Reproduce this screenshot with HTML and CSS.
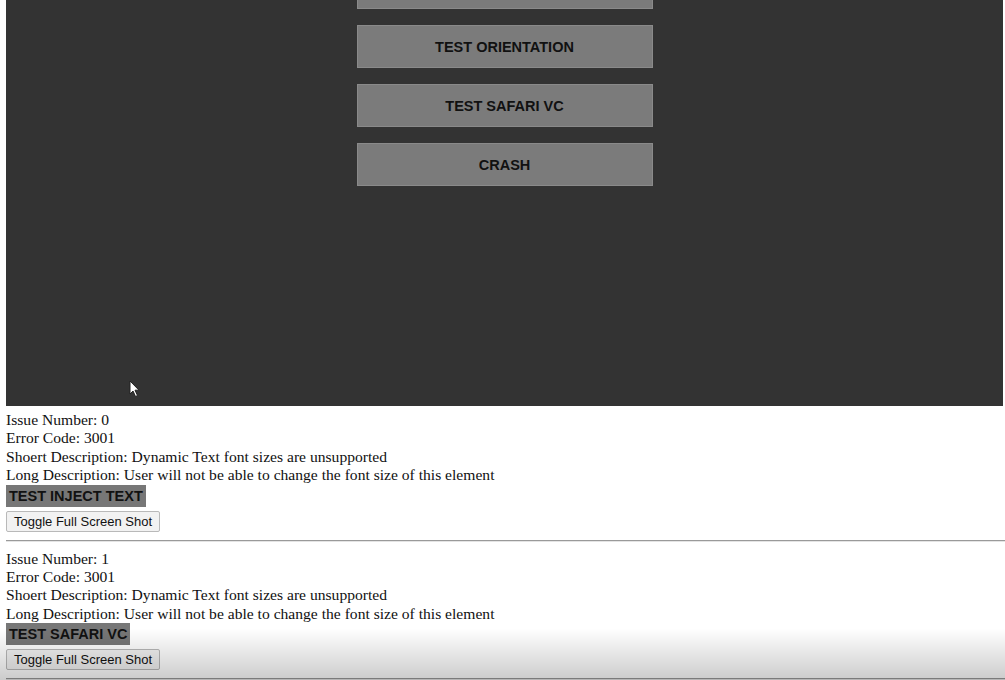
FILE: index.html
```html
<!DOCTYPE html>
<html lang="en">
<head>
    <meta charset="UTF-8">
    <meta name="viewport" content="width=device-width, initial-scale=1.0">
    <title>Accessibility Issues</title>
    <link rel="stylesheet" href="styles.css">
</head>
<body>

    <div class="shot">
        <div class="app-buttons">
            <!-- top button is scrolled out of view -->
            <div class="app-button"></div>
            <div class="app-button">TEST ORIENTATION</div>
            <div class="app-button">TEST SAFARI VC</div>
            <div class="app-button">CRASH</div>
        </div>
        <!-- mouse pointer caught in the recording -->
        <svg class="pointer" width="12" height="18" viewBox="0 0 12 18">
            <path d="M1 1 L1 14 L4 11 L6.5 16.5 L8.5 15.5 L6 10.2 L10 10.2 Z" fill="#fff" stroke="#222" stroke-width="1"/>
        </svg>
    </div>

    <div class="issue">
        <div>Issue Number: 0</div>
        <div>Error Code: 3001</div>
        <div>Shoert Description: Dynamic Text font sizes are unsupported</div>
        <div>Long Description: User will not be able to change the font size of this element</div>
        <div class="element-label">TEST INJECT TEXT</div>
        <button class="toggle-button">Toggle Full Screen Shot</button>
    </div>
    <hr>

    <div class="issue">
        <div>Issue Number: 1</div>
        <div>Error Code: 3001</div>
        <div>Shoert Description: Dynamic Text font sizes are unsupported</div>
        <div>Long Description: User will not be able to change the font size of this element</div>
        <div class="element-label">TEST SAFARI VC</div>
        <button class="toggle-button">Toggle Full Screen Shot</button>
    </div>
    <hr>

    <div class="fade"></div>

</body>
</html>
```
FILE: styles.css
```css
body {
    margin: 0;
    padding-left: 6px;
    font-family: "Liberation Serif", "Times New Roman", serif;
    font-size: 15.6px;
    color: #111;
    background-color: white;
    overflow: hidden;
}

.shot {
    position: relative;
    width: 997px;
    height: 406px;
    background-color: #333333;
    overflow: hidden;
    margin-bottom: 5px;
}

.app-buttons {
    display: flex;
    flex-direction: column;
    align-items: center;
    gap: 16px;
    margin-top: -34px;
}

.app-button {
    width: 294px;
    height: 41px;
    display: flex;
    align-items: center;
    justify-content: center;
    background-color: #7b7b7b;
    border: 1px solid #8a8a8a;
    color: #111;
    font-family: "Liberation Sans", Arial, sans-serif;
    font-weight: bold;
    font-size: 14.5px;
}

.pointer {
    position: absolute;
    left: 123px;
    top: 380px;
}

.issue {
    display: flex;
    flex-direction: column;
    align-items: flex-start;
    line-height: 18.4px;
}

.element-label {
    background-color: #777;
    color: #111;
    font-family: "Liberation Sans", Arial, sans-serif;
    font-weight: bold;
    font-size: 14.5px;
    line-height: 18px;
    padding: 2px 3px;
}

.toggle-button {
    margin-top: 4px;
    font-family: "Liberation Sans", Arial, sans-serif;
    font-size: 13px;
    color: #111;
    background-color: #f2f2f2;
    border: 1px solid #b9b9b9;
    border-radius: 2px;
    padding: 2px 7px;
    line-height: 15px;
}

hr {
    margin: 8px 0;
    border: none;
    border-top: 1px solid #9a9a9a;
    border-bottom: 1px solid #e4e4e4;
}

.fade {
    position: fixed;
    left: 0;
    right: 0;
    bottom: 0;
    height: 52px;
    background: linear-gradient(rgba(0, 0, 0, 0), rgba(0, 0, 0, 0.2));
    pointer-events: none;
}
```
